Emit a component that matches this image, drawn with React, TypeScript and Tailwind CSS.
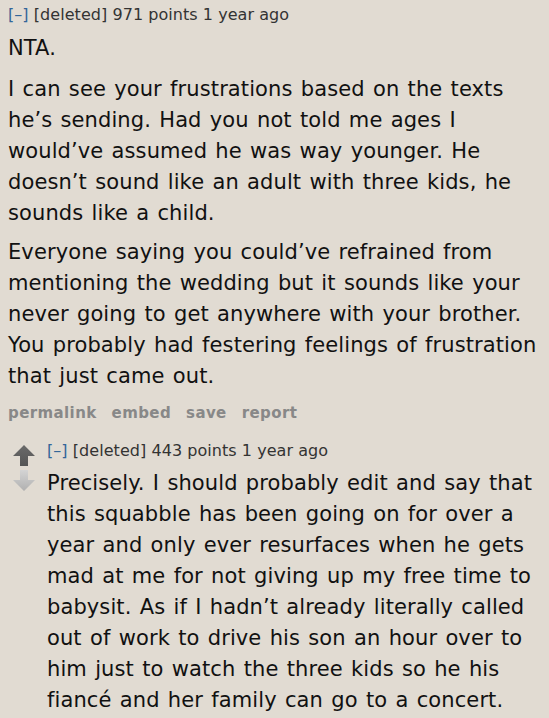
import React from 'react';

const Meta: React.FC<{ points: number }> = ({ points }) => (
  <div className="text-[16px] leading-[20px] tracking-[0.05px] text-[#333]">
    <span className="text-[#369]">[–]</span> [deleted] {points} points 1 year ago
  </div>
);

const Arrow: React.FC<{ up?: boolean }> = ({ up }) => (
  <svg width="24" height="22" viewBox="0 0 24 22">
    <defs>
      <linearGradient id={up ? 'gu' : 'gd'} x1="0" y1="0" x2="0" y2="1">
        <stop offset="0" stopColor={up ? '#6a6a6a' : '#d4d4d4'} />
        <stop offset="1" stopColor={up ? '#555' : '#b0b0b0'} />
      </linearGradient>
    </defs>
    {up ? (
      <path d="M12 1 L23 12 L16 12 L16 22 L8 22 L8 12 L1 12 Z" fill="url(#gu)" />
    ) : (
      <path d="M8 0 L16 0 L16 10 L23 10 L12 21 L1 10 L8 10 Z" fill="url(#gd)" />
    )}
  </svg>
);

export default function App() {
  return (
    <div
      className="min-h-[718px] w-[549px] bg-[#e1dbd2] pl-2 pt-[5px] text-[#111]"
      style={{ fontFamily: '"DejaVu Sans", Verdana, sans-serif' }}
    >
      <Meta points={971} />
      <div className="text-[21px] leading-[31px] tracking-[0.1px] [word-spacing:1.5px]">
        <p className="mt-[8px]">NTA.</p>
        <p className="mt-[10px]">
          I can see your frustrations based on the texts he’s sending. Had you not told me ages I would’ve assumed he
          was way younger. He doesn’t sound like an adult with three kids, he sounds like a child.
        </p>
        <p className="mt-[8px]">
          Everyone saying you could’ve refrained from mentioning the wedding but it sounds like your never going to
          get anywhere with your brother. You probably had festering feelings of frustration that just came out.
        </p>
      </div>
      <div className="mt-[11px] flex gap-[15px] text-[15px] font-bold leading-[20px] tracking-[0.4px] text-[#888]">
        <span>permalink</span>
        <span>embed</span>
        <span>save</span>
        <span>report</span>
      </div>

      <div className="mt-[18px] flex">
        <div className="flex w-[39px] flex-col items-center pt-[3px] pr-[8px]">
          <Arrow up />
          <div className="mt-[4px]">
            <Arrow />
          </div>
        </div>
        <div className="flex-1">
          <Meta points={443} />
          <p className="mt-[7px] text-[21px] leading-[31px] tracking-[0.1px] [word-spacing:1.5px]">
            Precisely. I should probably edit and say that this squabble has been going on for over a year and only
            ever resurfaces when he gets mad at me for not giving up my free time to babysit. As if I hadn’t already
            literally called out of work to drive his son an hour over to him just to watch the three kids so he his
            fiancé and her family can go to a concert.
          </p>
        </div>
      </div>
    </div>
  );
}
